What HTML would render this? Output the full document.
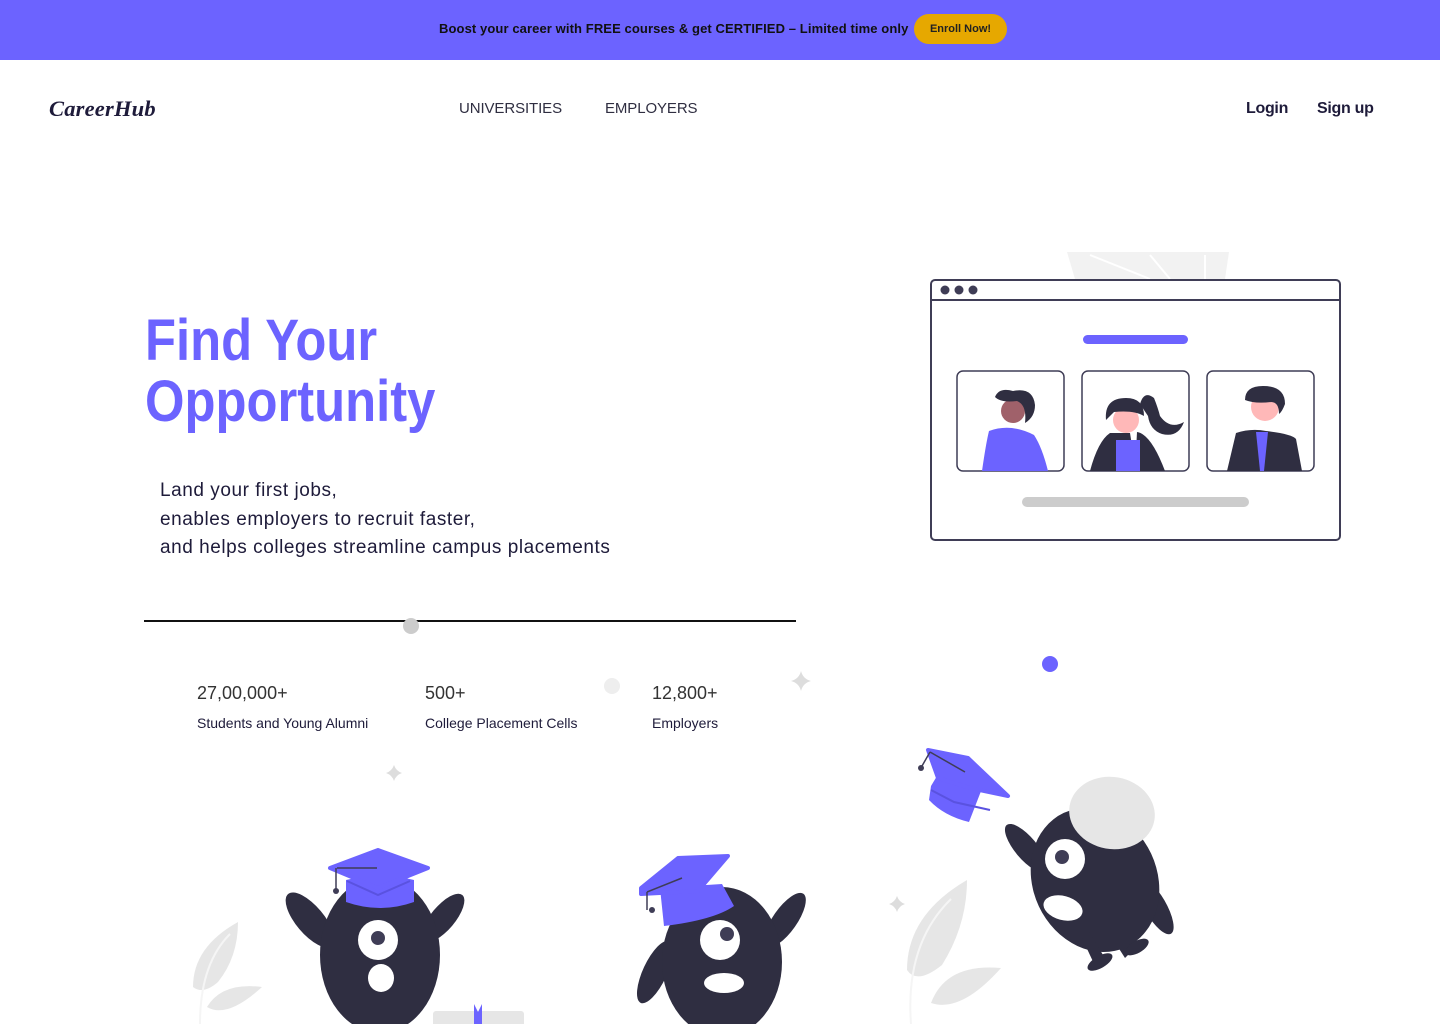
<!DOCTYPE html>
<html><head><meta charset="utf-8"><style>
*{margin:0;padding:0;box-sizing:border-box}
body{width:1440px;height:1024px;overflow:hidden;background:#fff;font-family:"Liberation Sans",sans-serif;color:#1e1b3a;position:relative}
.abs{position:absolute;white-space:nowrap}
.banner{position:absolute;left:0;top:0;width:1440px;height:60px;background:#6c63ff}
.btxt{left:439px;top:21px;font-size:13px;font-weight:bold;color:#111;letter-spacing:0.1px}
.btn{left:914px;top:14px;width:93px;height:30px;border-radius:15px;background:#e6a800;font-size:11px;font-weight:bold;color:#222;text-align:center;line-height:30px}
.logo{left:49px;top:96px;font-family:"Liberation Serif",serif;font-style:italic;font-weight:bold;font-size:22.5px;color:#1e1b3a;letter-spacing:0.2px}
.nav{top:100px;font-size:15px;color:#2f2e41;letter-spacing:-0.1px}
.auth{top:100px;font-size:16px;font-weight:bold;color:#1e1b3a;letter-spacing:-0.3px}
h1{position:absolute;left:145px;top:310px;font-size:58px;line-height:61px;color:#6c63ff;font-weight:bold;transform:scaleX(0.875);transform-origin:left top;white-space:nowrap}
.p{left:160px;top:477px;font-size:19px;line-height:28.5px;color:#1e1b3a;letter-spacing:0.55px}
.num{top:683px;font-size:18px;color:#333}
.lab{top:715px;font-size:14px;color:#1e1b3a}
</style></head><body>
<div class="banner"></div>
<div class="abs btxt">Boost your career with FREE courses &amp; get CERTIFIED – Limited time only</div>
<div class="abs btn">Enroll Now!</div>
<div class="abs logo">CareerHub</div>
<div class="abs nav" style="left:459px">UNIVERSITIES</div>
<div class="abs nav" style="left:605px">EMPLOYERS</div>
<div class="abs auth" style="left:1246px">Login</div>
<div class="abs auth" style="left:1317px">Sign up</div>
<h1>Find Your<br>Opportunity</h1>
<div class="abs p">Land your first jobs,<br>enables employers to recruit faster,<br>and helps colleges streamline campus placements</div>
<div class="abs num" style="left:197px">27,00,000+</div>
<div class="abs lab" style="left:197px">Students and Young Alumni</div>
<div class="abs num" style="left:425px">500+</div>
<div class="abs lab" style="left:425px">College Placement Cells</div>
<div class="abs num" style="left:652px">12,800+</div>
<div class="abs lab" style="left:652px">Employers</div>

<svg class="abs" style="left:0;top:0" width="1440" height="1024" viewBox="0 0 1440 1024">
<rect x="144" y="620" width="652" height="2" fill="#111"/>
<circle cx="411" cy="626" r="8" fill="#ccc"/>
<circle cx="612" cy="686" r="8" fill="#eee"/>
<circle cx="1050" cy="664" r="8" fill="#6c63ff"/>
<g fill="#ddd">
<path d="M801 671 q2 8 10 10 q-8 2 -10 10 q-2 -8 -10 -10 q8 -2 10 -10z"/>
<path d="M394 765 q2 6 8 8 q-6 2 -8 8 q-2 -6 -8 -8 q6 -2 8 -8z"/>
<path d="M897 896 q2 6 8 8 q-6 2 -8 8 q-2 -6 -8 -8 q6 -2 8 -8z"/>
</g>
<path d="M1067 252 h162 l-4 27 h-150z" fill="#f2f2f2"/>
<path d="M1090 255 l60 24 M1150 255 l20 24 M1205 255 v24" stroke="#fff" stroke-width="2"/>
<rect x="931" y="280" width="409" height="260" rx="4" fill="#fff" stroke="#3f3d56" stroke-width="2"/>
<rect x="931" y="299" width="409" height="2" fill="#3f3d56"/>
<circle cx="945" cy="290" r="4.5" fill="#3f3d56"/><circle cx="959" cy="290" r="4.5" fill="#3f3d56"/><circle cx="973" cy="290" r="4.5" fill="#3f3d56"/>
<rect x="1083" y="335" width="105" height="9" rx="4.5" fill="#6c63ff"/>
<rect x="1022" y="497" width="227" height="10" rx="5" fill="#ccc"/>
<g fill="none" stroke="#3f3d56" stroke-width="1.5">
<rect x="957" y="371" width="107" height="100" rx="6"/>
<rect x="1082" y="371" width="107" height="100" rx="6"/>
<rect x="1207" y="371" width="107" height="100" rx="6"/>
</g>
<path d="M989 431 q22 -8 45 4 q8 12 14 36 h-66 q4 -28 7 -40z" fill="#6c63ff"/>
<circle cx="1013" cy="411" r="12" fill="#a0616a"/>
<path d="M995 397 q4 -10 18 -6 q20 -4 22 14 q0 12 -10 18 q2 -18 -8 -22 q-16 2 -22 -4z" fill="#2f2e41"/>
<path d="M1110 433 h20 l6 38 h-46 q8 -30 20 -38z" fill="#2f2e41"/>
<path d="M1137 432 q14 2 28 39 h-30z" fill="#2f2e41"/>
<rect x="1116" y="440" width="24" height="31" fill="#6c63ff"/>
<circle cx="1126" cy="420" r="13" fill="#ffb8b8"/>
<path d="M1106 420 q-2 -22 20 -22 q18 0 18 18 q-10 -6 -30 -4 z" fill="#2f2e41"/>
<path d="M1140 404 q4 -14 14 -6 q4 10 6 18 q10 14 24 6 q-6 16 -22 12 q-12 -4 -14 -18z" fill="#2f2e41"/>
<path d="M1236 433 q15 -5 30 -2 q26 3 30 8 l6 32 h-75z" fill="#2f2e41"/>
<path d="M1256 432 h12 l-4 39 h-4z" fill="#6c63ff"/>
<circle cx="1265" cy="407" r="14" fill="#ffb8b8"/>
<path d="M1245 400 q0 -14 18 -14 q22 0 22 18 q-3 8 -6 10 q0 -12 -8 -12 q-16 2 -26 -2z" fill="#2f2e41"/>
<g fill="#e6e6e6">
<path d="M238 922 q-45 25 -45 65 q10 8 25 -5 q20 -25 20 -60z"/>
<path d="M262 987 q-40 -5 -55 20 q20 12 55 -20z"/>
<path d="M967 880 q-60 35 -60 90 q10 15 35 -5 q25 -40 25 -85z"/>
<path d="M1001 968 q-55 -5 -70 35 q30 10 70 -35z"/>
</g>
<path d="M200 1024 q0 -60 30 -90 M911 1024 q-6 -80 40 -125" stroke="#f5f5f5" stroke-width="2" fill="none"/>
<rect x="433" y="1011" width="91" height="20" rx="3" fill="#e6e6e6"/>
<path d="M474 1004 l4 8 4 -8 v20 h-8z" fill="#6c63ff"/>
<g fill="#2f2e41">
<ellipse cx="310" cy="920" rx="14" ry="34" transform="rotate(-40 310 920)"/>
<ellipse cx="443" cy="918" rx="12" ry="30" transform="rotate(40 443 918)"/>
<ellipse cx="380" cy="955" rx="60" ry="78"/>
<rect x="355" y="1005" width="14" height="25"/><rect x="390" y="1005" width="14" height="25"/>
</g>
<circle cx="378" cy="940" r="20" fill="#fff"/><circle cx="378" cy="938" r="7" fill="#3f3d56"/>
<ellipse cx="381" cy="978" rx="13" ry="14" fill="#fff"/>
<path d="M346 880 q35 -8 68 0 v22 q-34 12 -68 0z" fill="#6c63ff"/>
<path d="M330 868 l48 -18 50 18 -50 20z" fill="#6c63ff" stroke="#6c63ff" stroke-width="4" stroke-linejoin="round"/>
<path d="M347 881 l31 14 32 -14" stroke="#5a52e0" stroke-width="2" fill="none"/>
<path d="M337 868 h40 M336 868 v22" stroke="#3f3d56" stroke-width="1.5"/><circle cx="336" cy="891" r="3" fill="#3f3d56"/>
<g fill="#2f2e41">
<ellipse cx="785" cy="920" rx="12" ry="32" transform="rotate(35 785 920)"/>
<ellipse cx="655" cy="972" rx="12" ry="34" transform="rotate(25 655 972)"/>
<ellipse cx="722" cy="962" rx="60" ry="75"/>
<rect x="697" y="1005" width="14" height="25"/><rect x="732" y="1005" width="14" height="25"/>
</g>
<circle cx="720" cy="940" r="20" fill="#fff"/><circle cx="727" cy="934" r="7" fill="#3f3d56"/>
<ellipse cx="724" cy="983" rx="20" ry="10" fill="#fff"/>
<path d="M660 888 l62 -4 12 22 q-20 14 -70 20z" fill="#6c63ff"/>
<path d="M641 888 l37 -30 50 -2 -30 35 -57 3z" fill="#6c63ff" stroke="#6c63ff" stroke-width="4" stroke-linejoin="round"/>
<path d="M647 892 l35 -14 M647 892 v18" stroke="#3f3d56" stroke-width="1.5"/><circle cx="652" cy="910" r="3" fill="#3f3d56"/>
<g fill="#2f2e41">
<ellipse cx="1026" cy="848" rx="11" ry="30" transform="rotate(-40 1026 848)"/>
<ellipse cx="1155" cy="906" rx="11" ry="32" transform="rotate(-30 1155 906)"/>
<ellipse cx="1095" cy="880" rx="62" ry="74" transform="rotate(-25 1095 880)"/>
<path d="M1088 930 l18 30 -10 8 -14 -30z"/><path d="M1115 925 l18 25 -8 8 -16 -25z"/>
<ellipse cx="1100" cy="962" rx="14" ry="6" transform="rotate(-30 1100 962)"/>
<ellipse cx="1137" cy="947" rx="13" ry="6" transform="rotate(-30 1137 947)"/>
</g>
<ellipse cx="1112" cy="813" rx="43" ry="36" fill="#e6e6e6" transform="rotate(10 1112 813)"/>
<circle cx="1065" cy="859" r="20" fill="#fff"/><circle cx="1062" cy="857" r="7" fill="#3f3d56"/>
<ellipse cx="1063" cy="908" rx="20" ry="12" fill="#fff" transform="rotate(15 1063 908)"/>
<path d="M931 786 l12 -20 40 20 -14 36 q-25 -6 -40 -22z" fill="#6c63ff"/>
<path d="M928 750 l40 8 40 38 -38 -8 -32 -10z" fill="#6c63ff" stroke="#6c63ff" stroke-width="4" stroke-linejoin="round"/>
<path d="M931 790 l23 12 36 8" stroke="#5a52e0" stroke-width="2" fill="none"/>
<path d="M930 752 l35 20 M930 752 l-8 14" stroke="#3f3d56" stroke-width="1.5"/><circle cx="921" cy="768" r="3" fill="#3f3d56"/>
</svg>
</body></html>
